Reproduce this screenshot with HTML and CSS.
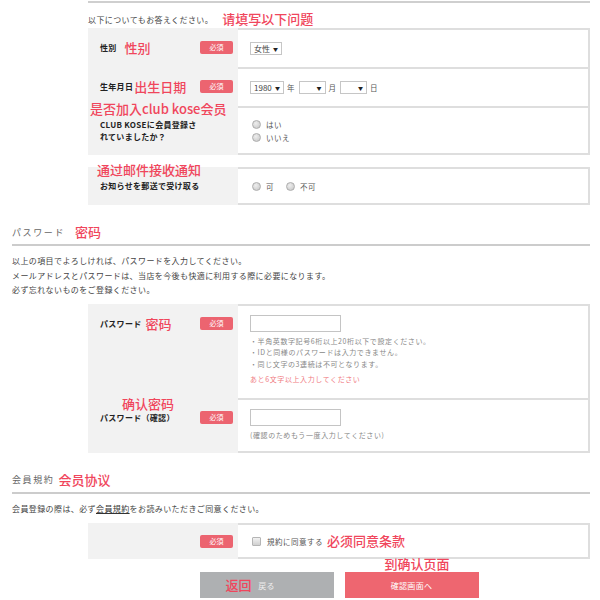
FILE: index.html
```html
<!DOCTYPE html>
<html lang="ja">
<head>
    <meta charset="UTF-8">
    <meta name="viewport" content="width=device-width, initial-scale=1.0">
    <title>会員登録</title>
    <link rel="stylesheet" href="styles.css">
</head>
<body>

<div class="page">

    <div class="sub">
        <div class="top-rule"></div>
        <p class="lead">以下についてもお答えください。<span class="note lead-note">请填写以下问题</span></p>

        <div class="form">
            <div class="row h39">
                <div class="label">
                    <span class="label-text">性別</span><span class="note ml8">性别</span>
                    <span class="badge">必須</span>
                </div>
                <div class="value">
                    <span class="select w32">女性<i>▼</i></span>
                </div>
            </div>
            <div class="row h39">
                <div class="label">
                    <span class="label-text">生年月日</span><span class="note ml1">出生日期</span>
                    <span class="badge">必須</span>
                </div>
                <div class="value date">
                    <span class="select w34">1980<i>▼</i></span><span class="unit">年</span>
                    <span class="select w27"><i>▼</i></span><span class="unit">月</span>
                    <span class="select w27"><i>▼</i></span><span class="unit">日</span>
                </div>
            </div>
            <div class="row h49">
                <div class="label">
                    <span class="note float note-club">是否加入club kose会员</span>
                    <span class="label-text two-line">CLUB KOSEに会員登録さ<br>れていましたか？</span>
                </div>
                <div class="value">
                    <div class="radios">
                        <label class="radio"><span class="dot"></span>はい</label>
                        <label class="radio"><span class="dot"></span>いいえ</label>
                    </div>
                </div>
            </div>
        </div>

        <div class="form mt12">
            <div class="row h38">
                <div class="label">
                    <span class="note float note-mail">通过邮件接收通知</span>
                    <span class="label-text">お知らせを郵送で受け取る</span>
                </div>
                <div class="value">
                    <label class="radio"><span class="dot"></span>可</label>
                    <label class="radio ml10"><span class="dot"></span>不可</label>
                </div>
            </div>
        </div>
    </div>

    <h2 class="section-title">パスワード<span class="note ml10">密码</span></h2>
    <p class="text">
        以上の項目でよろしければ、パスワードを入力してください。<br>
        メールアドレスとパスワードは、当店を今後も快適に利用する際に必要になります。<br>
        必ず忘れないものをご登録ください。
    </p>

    <div class="sub">
        <div class="form mt6">
            <div class="row h94 top">
                <div class="label">
                    <span class="label-text">パスワード</span><span class="note ml4">密码</span>
                    <span class="badge">必須</span>
                </div>
                <div class="value">
                    <input type="password" class="input">
                    <ul class="hints">
                        <li>・半角英数字記号6桁以上20桁以下で設定ください。</li>
                        <li>・IDと同様のパスワードは入力できません。</li>
                        <li>・同じ文字の3連続は不可となります。</li>
                    </ul>
                    <p class="warn">あと6文字以上入力してください</p>
                </div>
            </div>
            <div class="row h55 top">
                <div class="label">
                    <span class="note float note-confirm">确认密码</span>
                    <span class="label-text">パスワード（確認）</span>
                    <span class="badge">必須</span>
                </div>
                <div class="value">
                    <input type="password" class="input">
                    <p class="hint">(確認のためもう一度入力してください)</p>
                </div>
            </div>
        </div>
    </div>

    <h2 class="section-title">会員規約<span class="note ml4">会员协议</span></h2>
    <p class="text">会員登録の際は、必ず<a href="#" class="link">会員規約</a>をお読みいただきご同意ください。</p>

    <div class="sub">
        <div class="form mt7">
            <div class="row h36">
                <div class="label">
                    <span class="badge">必須</span>
                </div>
                <div class="value">
                    <label class="check"><span class="box"></span>規約に同意する</label><span class="note ml4">必须同意条款</span>
                </div>
            </div>
        </div>

        <div class="actions">
            <a href="#" class="btn btn-back"><span class="note float note-back">返回</span>戻る</a>
            <a href="#" class="btn btn-next"><span class="note float note-next">到确认页面</span>確認画面へ</a>
        </div>
    </div>

</div>

</body>
</html>
```

FILE: styles.css
```css
* {
    box-sizing: border-box;
}

html, body {
    margin: 0;
    overflow: hidden;
}

body {
    font-family: "Noto Sans CJK JP", "Noto Sans", sans-serif;
    color: #444;
    background: #fff;
}

.page {
    width: 600px;
    padding: 0 10px 0 12px;
}

.sub {
    margin-left: 76px;
}

.top-rule {
    margin-top: 1px;
    border-top: 2px solid #cfcfcf;
}

.lead {
    display: flex;
    align-items: center;
    height: 14px;
    margin: 9px 0 2px;
    font-size: 8px;
    letter-spacing: 0.4px;
}

.lead-note {
    margin-left: 9px;
}

/* Annotations */
.note {
    font-family: "Noto Sans CJK SC", sans-serif;
    font-size: 13px;
    line-height: 14px;
    font-weight: 500;
    color: #f0465c;
    white-space: nowrap;
    letter-spacing: 0;
}

.float {
    position: absolute;
}

.note-club { left: 2px; top: -4px; }
.note-mail { left: 9px; top: -4px; }
.note-confirm { left: 34px; top: -1px; }
.note-back { left: 26px; top: 6px; }
.note-next { left: 40px; top: -15px; }

.ml1 { margin-left: 1px; }
.ml4 { margin-left: 4px; }
.ml8 { margin-left: 8px; }
.ml10 { margin-left: 10px; }
.mt6 { margin-top: 6px; }
.mt7 { margin-top: 7px; }
.mt12 { margin-top: 12px; }

/* Form table */
.row {
    display: flex;
}

.h36 { height: 36px; }
.h38 { height: 38px; }
.h39 { height: 39px; }
.h49 { height: 49px; }
.h55 { height: 55px; }
.h94 { height: 94px; }

.label {
    position: relative;
    width: 150px;
    flex-shrink: 0;
    display: flex;
    align-items: center;
    padding: 0 5px 0 12px;
    background: #f2f2f2;
}

.label-text {
    font-size: 8px;
    font-weight: bold;
    color: #222;
    letter-spacing: 0.3px;
    line-height: 12px;
}

.badge {
    margin-left: auto;
    width: 33px;
    height: 13px;
    border-radius: 2px;
    background: #ec6470;
    color: #fff;
    font-size: 7px;
    line-height: 13px;
    text-align: center;
}

.value {
    flex: 1;
    display: flex;
    align-items: center;
    padding-left: 12px;
    border-top: 2px solid #dedede;
    border-right: 2px solid #dedede;
    font-size: 8px;
    color: #555;
}

.form .row:last-child .value {
    border-bottom: 2px solid #dedede;
}

.row.top .label {
    align-items: flex-start;
    padding-top: 11px;
}

.row.top .label-text,
.row.top .note {
    line-height: 17px;
}

.row.top .note.float {
    line-height: 14px;
}

.row.top .badge {
    margin-top: 2px;
}

.row.top .value {
    flex-direction: column;
    align-items: flex-start;
    padding-top: 9px;
}

/* Fake selects */
.select {
    display: inline-flex;
    align-items: center;
    justify-content: space-between;
    height: 13px;
    padding: 0 3px;
    border: 1px solid #c6c6c6;
    background: #fff;
    font-size: 8px;
    color: #444;
}

.select i {
    margin-left: auto;
    font-style: normal;
    font-size: 5px;
    color: #222;
}

.w27 { width: 27px; }
.w32 { width: 32px; }
.w34 { width: 34px; }

.date {
    gap: 3px;
}

.unit {
    font-size: 7.5px;
    margin-right: 1px;
}

/* Radios and checkbox */
.radios {
    display: flex;
    flex-direction: column;
}

.radio,
.check {
    display: inline-flex;
    align-items: center;
    height: 13px;
    font-size: 7.5px;
    color: #555;
    letter-spacing: 0.5px;
}

.dot {
    width: 9px;
    height: 9px;
    margin: 0 5px 0 2px;
    border: 1px solid #adadad;
    border-radius: 50%;
    background: radial-gradient(circle at 40% 35%, #eeeeee, #c4c4c4);
}

.box {
    width: 9px;
    height: 9px;
    margin: 0 6px 0 2px;
    border: 1px solid #b5b5b5;
    border-radius: 1px;
    background: linear-gradient(#f2f2f2, #d0d0d0);
}

/* Password */
.input {
    width: 91px;
    height: 17px;
    margin: 0;
    padding: 0 3px;
    border: 1px solid #c4c4c4;
    background: #fff;
}

.hints {
    list-style: none;
    margin: 4px 0 0;
    padding: 0;
}

.hints li,
.hint {
    font-size: 7px;
    line-height: 11.5px;
    color: #888;
    letter-spacing: 0.6px;
}

.hint {
    margin: 4px 0 0;
}

.warn {
    margin: 4px 0 0;
    font-size: 7px;
    line-height: 11px;
    color: #f07a82;
    letter-spacing: 0.6px;
}

/* Sections */
.section-title {
    display: flex;
    align-items: center;
    height: 18px;
    margin: 18px 0 0;
    padding-bottom: 3px;
    box-sizing: content-box;
    border-bottom: 2px solid #cccccc;
    font-size: 9px;
    font-weight: normal;
    color: #666;
    letter-spacing: 1.6px;
}

.text {
    margin: 8px 0 0;
    font-size: 8px;
    line-height: 14.5px;
    color: #444;
    letter-spacing: 0.4px;
}

.link {
    color: #333;
    text-decoration: underline;
}

/* Buttons */
.actions {
    display: flex;
    justify-content: center;
    gap: 11px;
    margin-top: 13px;
}

.btn {
    position: relative;
    display: flex;
    align-items: center;
    justify-content: center;
    width: 134px;
    height: 26px;
    font-size: 8px;
    color: #fff;
    text-decoration: none;
    letter-spacing: 0.3px;
}

.btn-back {
    background: #aeb0b2;
    color: #eeeeee;
}

.btn-next {
    background: #ee6670;
}
```
